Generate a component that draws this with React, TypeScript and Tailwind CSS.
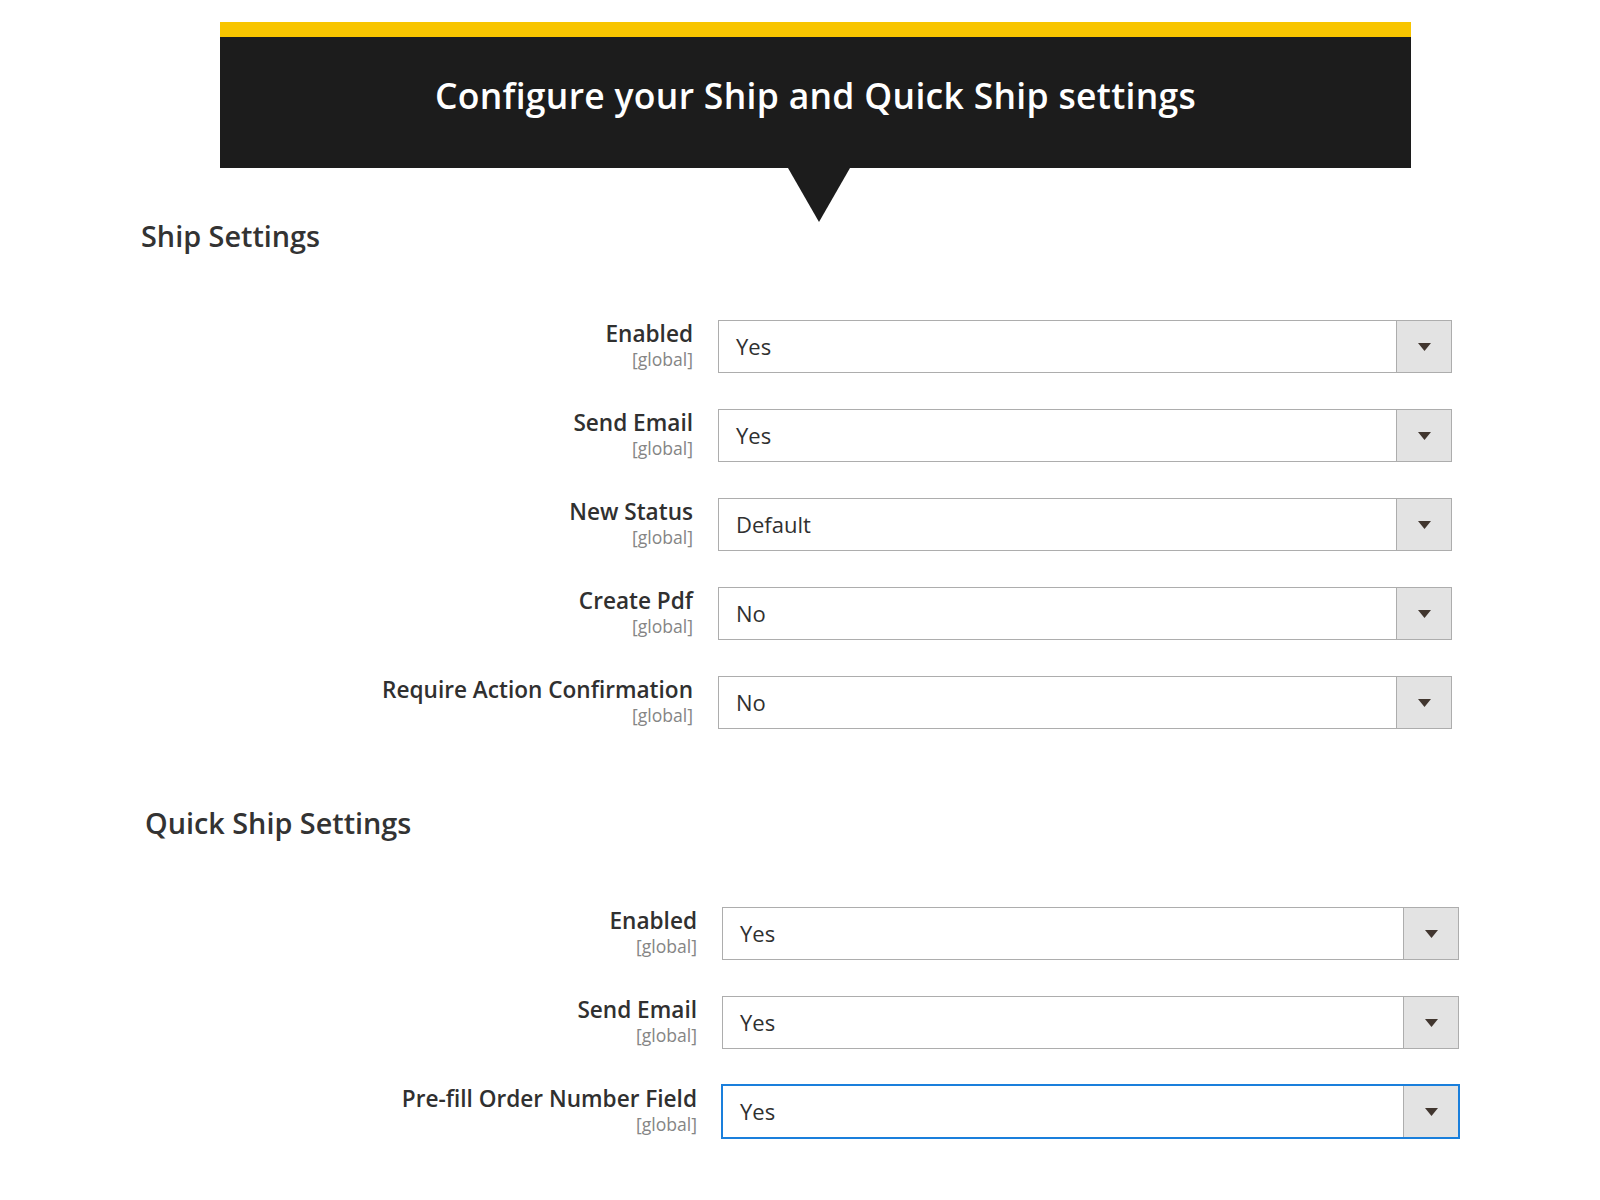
const shipRows = [
  { label: "Enabled", value: "Yes" },
  { label: "Send Email", value: "Yes" },
  { label: "New Status", value: "Default" },
  { label: "Create Pdf", value: "No" },
  { label: "Require Action Confirmation", value: "No" },
];

const quickRows = [
  { label: "Enabled", value: "Yes" },
  { label: "Send Email", value: "Yes" },
  { label: "Pre-fill Order Number Field", value: "Yes", focused: true },
];

function SelectBox({ value, focused }: { value: string; focused?: boolean }) {
  return (
    <div
      className={
        "flex h-[53px] flex-1 border " +
        (focused ? "border-[#1a7fdc] shadow-[0_0_0_1px_#1a7fdc]" : "border-[#adadad]")
      }
    >
      <div className="flex flex-1 items-center bg-white pl-[17px] text-[22px] text-[#303030]">{value}</div>
      <div className="flex w-[55px] items-center justify-center border-l border-[#adadad] bg-[#e3e3e3]">
        <svg width="13" height="8" viewBox="0 0 13 8">
          <path d="M0 0 H13 L6.5 8 Z" fill="#41362f" />
        </svg>
      </div>
    </div>
  );
}

function FieldRow({
  label,
  value,
  focused,
  labelWidth,
  selectWidth,
}: {
  label: string;
  value: string;
  focused?: boolean;
  labelWidth: string;
  selectWidth: string;
}) {
  return (
    <div className="flex items-start gap-[25px]">
      <div className={labelWidth + " -mt-[1px] flex flex-col items-end"}>
        <span className="text-[22.6px] font-semibold leading-[30px] text-[#303030]">{label}</span>
        <span className="text-[17.6px] leading-[20px] text-[#858585]">[global]</span>
      </div>
      <div className={selectWidth + " flex"}>
        <SelectBox value={value} focused={focused} />
      </div>
    </div>
  );
}

export default function App() {
  return (
    <div
      className="relative h-[1200px] w-[1600px] overflow-hidden bg-white"
      style={{ fontFamily: '"Open Sans", "Noto Sans", sans-serif' }}
    >
      {/* banner */}
      <div className="relative ml-[220px] mt-[22px] w-[1191px]">
        <div className="h-[15px] bg-[#f8c500]" />
        <div className="flex h-[131px] items-center justify-center bg-[#1c1c1c]">
          <h1 className="pb-[14px] text-[35.5px] font-semibold tracking-[0.3px] text-white">
            Configure your Ship and Quick Ship settings
          </h1>
        </div>
        <svg className="absolute left-[568px] top-[146px]" width="62" height="54" viewBox="0 0 62 54">
          <path d="M0 0 H62 L31 54 Z" fill="#1c1c1c" />
        </svg>
      </div>

      {/* ship settings */}
      <h2 className="ml-[141px] mt-[50px] text-[28.8px] font-semibold leading-[36px] text-[#333333]">Ship Settings</h2>
      <div className="mt-[66px] flex flex-col gap-[36px]">
        {shipRows.map((r) => (
          <FieldRow key={r.label} label={r.label} value={r.value} labelWidth="w-[693px]" selectWidth="w-[734px]" />
        ))}
      </div>

      {/* quick ship settings */}
      <h2 className="ml-[145px] mt-[76px] text-[28.8px] font-semibold leading-[36px] text-[#333333]">Quick Ship Settings</h2>
      <div className="mt-[66px] flex flex-col gap-[36px]">
        {quickRows.map((r) => (
          <FieldRow
            key={r.label}
            label={r.label}
            value={r.value}
            focused={r.focused}
            labelWidth="w-[697px]"
            selectWidth="w-[737px]"
          />
        ))}
      </div>
    </div>
  );
}
